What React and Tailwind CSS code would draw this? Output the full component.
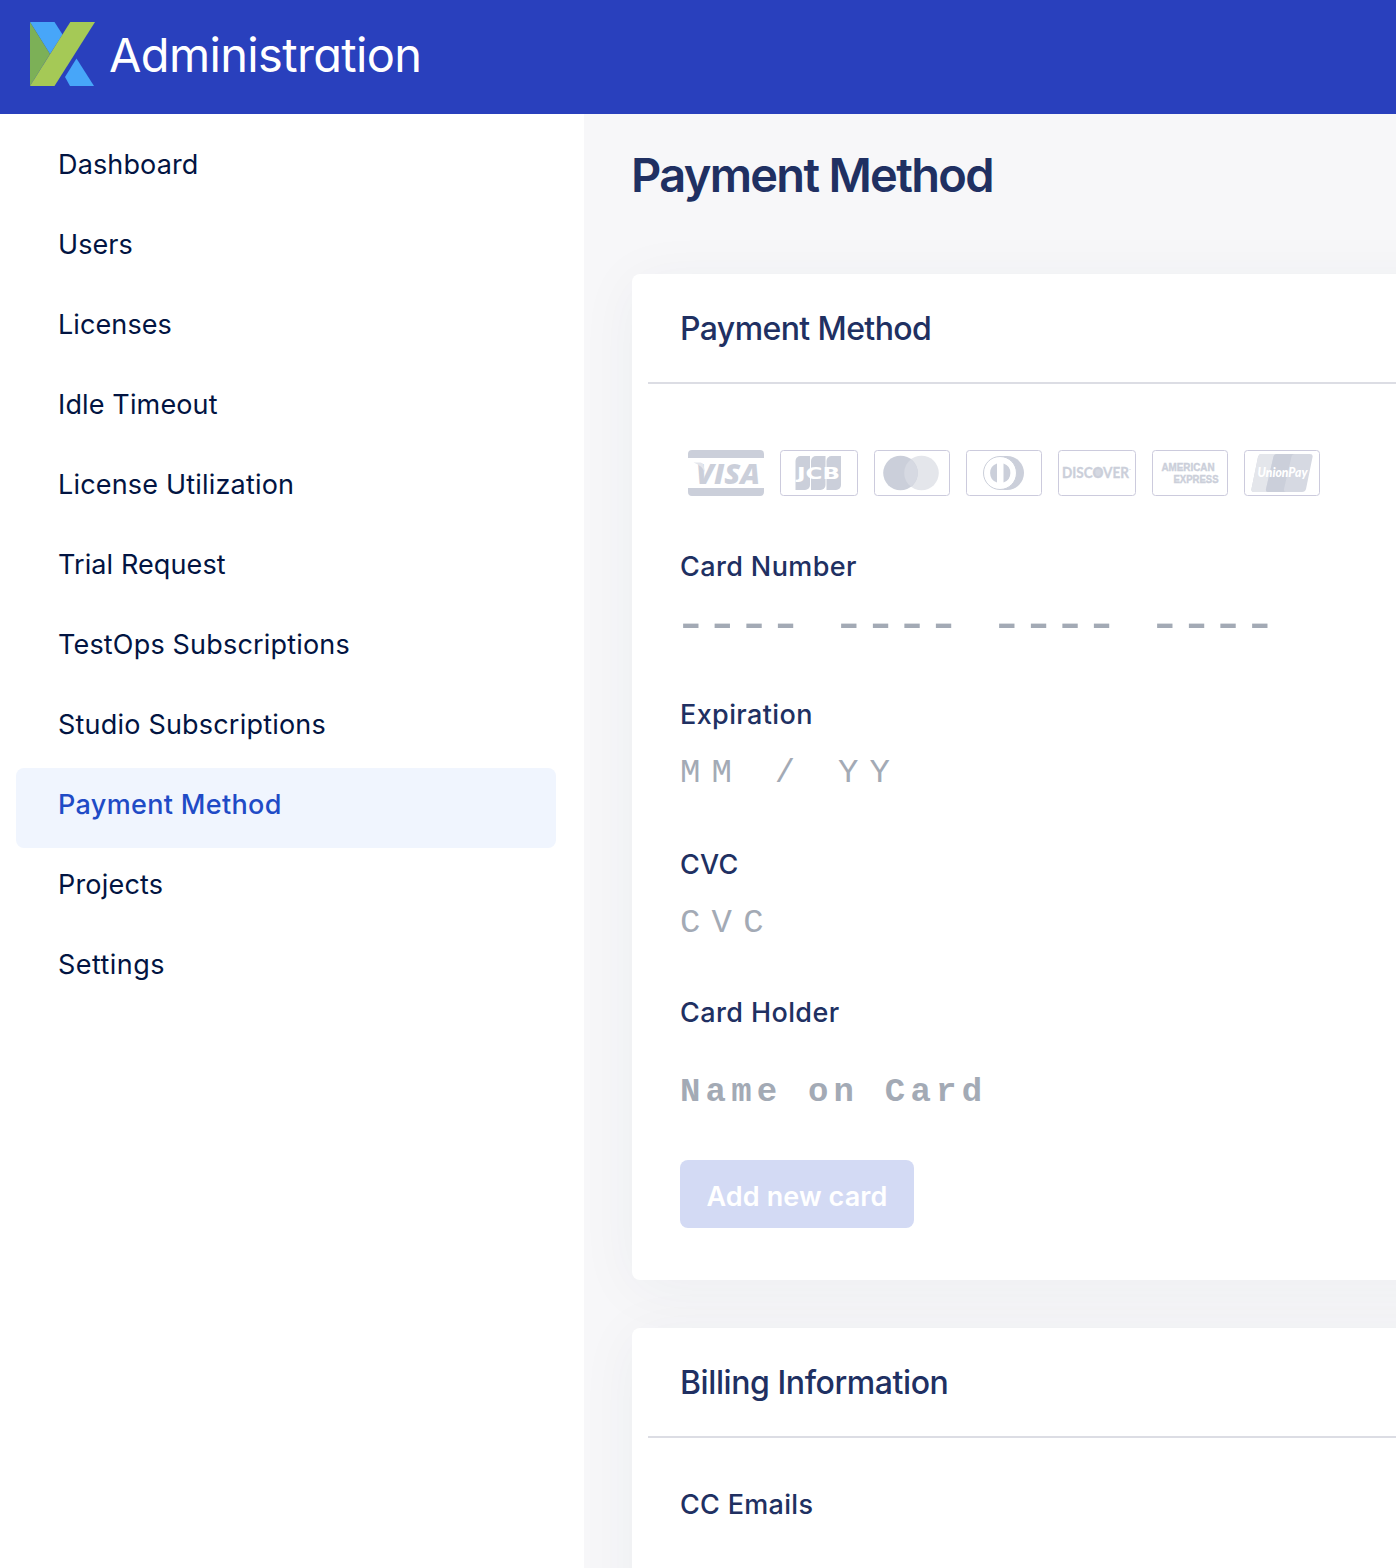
const NAV = [
  ["Dashboard", "tracking-[0.14px]"],
  ["Users", "tracking-[0.05px]"],
  ["Licenses", "tracking-[0.1px]"],
  ["Idle Timeout", "tracking-[0.14px]"],
  ["License Utilization", "tracking-[0.19px]"],
  ["Trial Request", "tracking-[0.1px]"],
  ["TestOps Subscriptions", "tracking-[0.18px]"],
  ["Studio Subscriptions", "tracking-[0.2px]"],
  ["Payment Method", "tracking-[0.33px]"],
  ["Projects", "tracking-[0.2px]"],
  ["Settings", "tracking-[0.45px]"],
];
const ACTIVE = "Payment Method";

function Logo() {
  return (
    <svg className="h-16 w-[65px] shrink-0" viewBox="0 0 65 64">
      <path d="M0 0H24.500L32.500 12.500L20 32Z" fill="#47a6f9" />
      <path d="M46.500 36.500L64 64H40L35 55Z" fill="#47a6f9" />
      <path d="M0 0L20 32L0 64Z" fill="#7cb057" />
      <path d="M40.300 0H65L24.500 64H0Z" fill="#a5c956" />
    </svg>
  );
}

function CardFrame({ wide, children }) {
  return (
    <svg className={wide ? "h-[46px] w-[78px] overflow-visible" : "h-[46px] w-[76px] overflow-visible"} viewBox={wide ? "0 0 78 46" : "0 0 76 46"}>
      <rect x="0.5" y="0.5" width={wide ? 77 : 75} height="45" rx="3" fill="#fff" stroke="#cccbdd" />
      {children}
    </svg>
  );
}

function Cards() {
  return (
    <div className="ml-2 flex gap-4">
      <svg className="h-[46px] w-[76px] overflow-visible" viewBox="0 0 76 46">
        <path d="M0 8V4a4 4 0 0 1 4-4H72a4 4 0 0 1 4 4V8ZM0 38V42a4 4 0 0 0 4 4H72a4 4 0 0 0 4-4V38Z" fill="#cbcfda" />
        <text x="8" y="33.500" fontFamily="Open Sans" fontSize="29" fontWeight="800" fontStyle="italic" textLength="64" lengthAdjust="spacingAndGlyphs" fill="#cbcfda">VISA</text>
        <path d="M5.500 12.500H12.500Q15 12.500 15.500 15L17 22.500Q14 15.500 5.500 12.500Z" fill="#e3e5eb" />
      </svg>
      <CardFrame wide>
        {[15.500, 31, 46.500].map((x) => (
          <path key={x} transform={`translate(${x} 6)`} d="M5 0H14.500V29a5 5 0 0 1-5 5H0V5a5 5 0 0 1 5-5Z" fill="#cbcfda" />
        ))}
        <text x="17" y="28.500" fontFamily="DejaVu Sans" fontSize="15.500" fontWeight="700" textLength="43" lengthAdjust="spacingAndGlyphs" fill="#fff">JCB</text>
      </CardFrame>
      <CardFrame>
        <circle cx="47.500" cy="23" r="17.300" fill="#e4e6eb" />
        <circle cx="26.500" cy="23" r="17.300" fill="#cbcfda" />
        <path d="M37 9.250a17.300 17.300 0 0 1 0 27.500a17.300 17.300 0 0 1 0-27.500Z" fill="#d6d9e2" />
      </CardFrame>
      <CardFrame>
        <path d="M34 6H41a17 17 0 0 1 0 34H34Z" fill="#cbcfda" />
        <circle cx="34" cy="23" r="16.500" fill="#fff" stroke="#cbcfda" />
        <path d="M31 13.500V32.500a10 10 0 0 1 0-19ZM37.500 13.500V32.500a10 10 0 0 0 0-19Z" fill="#cbcfda" />
      </CardFrame>
      <CardFrame wide>
        <circle cx="40" cy="23" r="4.500" fill="#d6d9e2" />
        <text x="4" y="28" fontFamily="Lato" fontSize="14.500" fontWeight="700" stroke="#cbcfda" strokeWidth="0.3" textLength="67" lengthAdjust="spacingAndGlyphs" fill="#cbcfda">DISCOVER</text>
        <circle cx="72" cy="19.500" r="0.600" fill="#cbcfda" />
      </CardFrame>
      <CardFrame>
        <text x="9.500" y="20.800" fontFamily="Liberation Sans" fontSize="10" fontWeight="700" stroke="#cbcfda" strokeWidth="0.4" textLength="53" lengthAdjust="spacingAndGlyphs" fill="#cbcfda">AMERICAN</text>
        <text x="21.500" y="32.500" fontFamily="Liberation Sans" fontSize="10" fontWeight="700" stroke="#cbcfda" strokeWidth="0.4" textLength="45" lengthAdjust="spacingAndGlyphs" fill="#cbcfda">EXPRESS</text>
      </CardFrame>
      <CardFrame>
        <path d="M17 4H66q3.300 0 2.500 3.200L62 39q-.8 3-4 3H10q-3.300 0-2.500-3.200L14 7q.8-3 3-3Z" fill="#d6d9e2" />
        <path d="M17 4H33q-3 0-3.600 3L22 39q-.5 3 2 3H10q-3.300 0-2.500-3.200L14 7q.8-3 3-3Z" fill="#e4e6eb" />
        <path d="M33 4H51q-3 0-3.600 3L40 39q-.5 3 2 3H24q-2.500 0-2-3L29.400 7q.6-3 3.600-3Z" fill="#cbcfda" />
        <text x="13.500" y="27" fontFamily="Lato" fontSize="13" fontWeight="900" fontStyle="italic" textLength="50" lengthAdjust="spacingAndGlyphs" fill="#fff">UnionPay</text>
      </CardFrame>
    </div>
  );
}

function CardTitle({ children, className }) {
  return (
    <div className="ml-4 flex h-[110px] items-center border-b-2 border-[#dcdde4] pl-8">
      <h2 className={`mt-0.5 text-[32px] leading-10 font-medium ${className}`}>{children}</h2>
    </div>
  );
}

export default function App() {
  return (
    <div className="h-[1568px] w-full overflow-hidden bg-white font-['Inter',sans-serif] text-[#203062]">
      <header className="flex h-[114px] items-start bg-[#2940bd] pt-[22px] pl-[30px]">
        <Logo />
        <span className="mt-[5px] ml-[14px] text-[47px] leading-[56px] font-normal tracking-[-0.65px] text-white [font-feature-settings:'cv11'_1]">Administration</span>
      </header>
      <div className="flex h-[1454px]">
        <nav className="w-[584px] shrink-0 pt-[14px] pr-7 pl-4">
          {NAV.map(([label, tracking]) => (
            <a key={label} className={`flex h-20 items-center rounded-lg pb-1.5 pl-[42px] text-[27px] ${label === ACTIVE ? "bg-[#f0f5fe] font-medium text-[#1f4bc6]" : "text-[#021442]"} ${tracking}`}>{label}</a>
          ))}
        </nav>
        <main className="flex-1 overflow-hidden bg-[#f7f7f9] pt-[29px] pl-12">
          <h1 className="-ml-px text-[47px] leading-[64px] font-semibold tracking-[-1.7px]">Payment Method</h1>
          <section className="mt-[67px] h-[1006px] w-[900px] rounded-lg bg-white shadow-[0_8px_60px_rgba(30,50,70,0.05)]">
            <CardTitle className="tracking-[-0.6px]">Payment Method</CardTitle>
            <div className="flex flex-col items-start pt-[66px] pl-12 text-[27px] leading-9 font-medium">
              <Cards />
              <label className="mt-[53px] tracking-[0.38px]">Card Number</label>
              <span className="mt-[23px] mb-px -ml-[6px] font-['Liberation_Mono',monospace] text-[56px] font-normal tracking-[-2px] whitespace-pre text-[#a3aab5]">---- ---- ---- ----</span>
              <label className="mt-[52px] tracking-[0.38px]">Expiration</label>
              <span className="mt-[22px] font-['Liberation_Mono',monospace] text-[34px] font-normal tracking-[11.2px] text-[#a3aab5]">MM / YY</span>
              <label className="mt-[56px] tracking-[0.2px]">CVC</label>
              <span className="mt-[22px] font-['Liberation_Mono',monospace] text-[34px] font-normal tracking-[11.2px] text-[#a3aab5]">CVC</span>
              <label className="mt-[54px] tracking-[0.4px]">Card Holder</label>
              <span className="mt-[43px] font-['Liberation_Mono',monospace] text-[34px] font-bold tracking-[5.2px] text-[#a3aab5]">Name on Card</span>
              <button className="mt-[50px] flex h-[68px] w-[234px] items-center justify-center rounded-lg bg-[#d3daf4] pt-1.5 font-semibold tracking-[0.1px] text-white">Add new card</button>
            </div>
          </section>
          <section className="mt-12 h-[400px] w-[900px] rounded-lg bg-white shadow-[0_8px_60px_rgba(30,50,70,0.05)]">
            <CardTitle className="tracking-[-0.42px]">Billing Information</CardTitle>
            <div className="pt-[49px] pl-12 text-[27px] leading-9 font-medium tracking-[0.3px]">CC Emails</div>
          </section>
        </main>
      </div>
    </div>
  );
}
